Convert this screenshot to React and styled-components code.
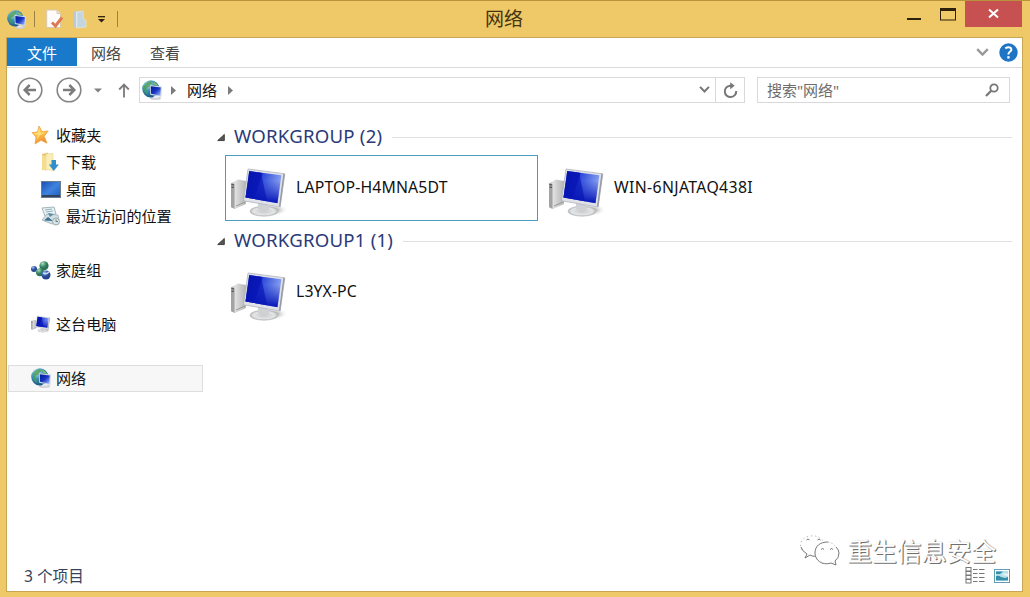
import React from "react";
import styled, { createGlobalStyle } from "styled-components";

const GlobalStyle = createGlobalStyle`
  * { box-sizing: border-box; }
  body { margin: 0; overflow: hidden; font-family: "Noto Sans", "Noto Sans CJK SC", sans-serif; }
  svg { display: block; flex: none; overflow: visible; }
`;

const Window = styled.div`
  position: relative;
  width: 1030px;
  height: 597px;
  background: #efc867;
  border-top: 1px solid #b8923c;
  display: flex;
  flex-direction: column;
  padding: 0 7px 5px 6px;
`;

const TitleBar = styled.header`
  height: 36px;
  display: flex;
  align-items: flex-start;
`;

const QuickAccess = styled.div`
  width: 460px;
  height: 36px;
  display: flex;
  align-items: center;
`;

const QuickItem = styled.div`
  margin-left: ${(p) => p.$gap}px;
`;

const Separator = styled.i`
  width: 1px;
  height: 16px;
  background: #9c8146;
  margin-left: ${(p) => p.$gap}px;
`;

const Title = styled.h1`
  margin: 0;
  width: 76px;
  text-align: center;
  font-size: 19px;
  line-height: 36px;
  font-weight: 400;
  color: #46340f;
`;

const WindowButtons = styled.div`
  margin-left: auto;
  margin-right: 1px;
  display: flex;
`;

const CaptionButton = styled.div`
  width: ${(p) => p.$width}px;
  height: 26px;
  display: flex;
  justify-content: center;
  background: ${(p) => (p.$danger ? "#c75050" : "transparent")};
`;

const Client = styled.main`
  flex: 1;
  background: #fff;
  border: 1px solid #c9a655;
  display: flex;
  flex-direction: column;
`;

const Ribbon = styled.nav`
  height: 30px;
  border-bottom: 1px solid #dadbdc;
  display: flex;
  align-items: flex-start;
`;

const Tab = styled.div`
  width: ${(p) => p.$width}px;
  height: 28px;
  line-height: 30px;
  text-align: center;
  font-size: 15px;
  color: ${(p) => (p.$active ? "#fff" : "#444")};
  background: ${(p) => (p.$active ? "#1979ca" : "transparent")};
`;

const RibbonTools = styled.div`
  margin-left: auto;
  height: 28px;
  padding-right: 4px;
  display: flex;
  align-items: center;
  gap: 10px;
`;

const NavBar = styled.div`
  height: 44px;
  padding: 0 11px 0 9.5px;
  display: flex;
  align-items: center;
`;

const NavButtons = styled.div`
  width: 122.5px;
  display: flex;
  align-items: center;
`;

const AddressBox = styled.div`
  width: 606px;
  height: 26px;
  border: 1px solid #d9d9d9;
  display: flex;
  align-items: center;
  padding-left: 2px;
  font-size: 15px;
  line-height: 24px;
  color: #111;
`;

const Crumb = styled.span`
  margin: -1px 11px 0 11px;
`;

const AddressEnd = styled.div`
  margin-left: auto;
  height: 24px;
  display: flex;
  align-items: center;
`;

const Refresh = styled.div`
  width: 29px;
  height: 24px;
  margin-left: 5px;
  border-left: 1px solid #d9d9d9;
  display: grid;
  place-items: center;
`;

const SearchBox = styled.div`
  margin-left: 12px;
  width: 253px;
  height: 26px;
  border: 1px solid #d9d9d9;
  padding: 0 10px 0 9px;
  display: flex;
  align-items: center;
  justify-content: space-between;
  font-size: 15px;
  line-height: 24px;
  color: #6d6d6d;
`;

const Body = styled.div`
  flex: 1;
  display: flex;
`;

const Sidebar = styled.aside`
  width: 196px;
  padding: 10px 0 0 1px;
`;

const TreeRow = styled.div`
  height: 27px;
  margin-bottom: ${(p) => (p.$spaced ? 27 : 0)}px;
  padding-left: ${(p) => (p.$child ? 32 : 22)}px;
  padding-bottom: 1px;
  border: 1px solid ${(p) => (p.$selected ? "#dedede" : "transparent")};
  background: ${(p) => (p.$selected ? "#f7f7f7" : "transparent")};
  display: flex;
  align-items: center;
  font-size: 15.1px;
  line-height: 25px;
  color: #111;
  white-space: nowrap;
`;

const TreeIcon = styled.span`
  width: 20px;
  margin-right: 5px;
`;

const Content = styled.section`
  flex: 1;
  padding: 13px 10px 0 14px;
`;

const GroupHeader = styled.div`
  height: 24px;
  display: flex;
  align-items: center;
  font-size: 18.6px;
  line-height: 24px;
  letter-spacing: 0.22px;
  color: #2b3a78;
  white-space: nowrap;
`;

const GroupName = styled.span`
  margin: -2px 10px 0 9px;
`;

const GroupRule = styled.i`
  flex: 1;
  height: 1px;
  background: #dfe0e4;
`;

const Items = styled.div`
  height: 80px;
  padding: 6px 0 0 8px;
  display: flex;
  gap: 5px;
`;

const Computer = styled.div`
  width: 313px;
  height: 66px;
  padding: 10px 0 0 4px;
  border: 1px solid ${(p) => (p.$selected ? "#4c9cc2" : "transparent")};
  display: flex;
  align-items: center;
  gap: 8px;
`;

const ComputerName = styled.span`
  margin-top: -12px;
  font-size: 15.8px;
  line-height: 20px;
  letter-spacing: ${(p) => p.$track}px;
  color: #111;
`;

const StatusBar = styled.footer`
  height: 29px;
  padding: 0 12px 2px 17px;
  display: flex;
  align-items: center;
  justify-content: space-between;
  font-size: 15.6px;
  line-height: 26px;
  color: #35445c;
`;

const ViewModes = styled.div`
  display: flex;
  align-items: center;
  gap: 9px;
`;

const Watermark = styled.div`
  position: absolute;
  left: 799px;
  top: 533px;
  display: flex;
  align-items: center;
  gap: 7px;
  font-size: 25px;
  line-height: 34px;
  font-weight: 400;
  letter-spacing: -0.2px;
  color: #fff;
  text-shadow: 1px 1px 0 #6f6f6f, 1px 0 1px #a3a3a3;
`;

const NetworkIcon = ({ size = 20 }) => (
  <svg width={size} height={size} viewBox="0 0 20 20">
    <defs>
      <radialGradient id="globe" cx=".35" cy=".25" r=".8">
        <stop offset="0" stopColor="#b9e3e6" />
        <stop offset=".45" stopColor="#3b93b5" />
        <stop offset="1" stopColor="#15507f" />
      </radialGradient>
      <linearGradient id="miniScreen" x2="1" y2="1">
        <stop offset="0" stopColor="#071a92" />
        <stop offset=".5" stopColor="#1633c4" />
        <stop offset="1" stopColor="#a9c4ff" />
      </linearGradient>
    </defs>
    <ellipse cx="13.5" cy="18.3" rx="5.5" ry="1.5" fill="#c8ccd2" />
    <circle cx="8.8" cy="8.8" r="8.6" fill="url(#globe)" />
    <path d="M2 6Q5 1 9 1.3Q11 3 8.5 4.5Q8 7 5 7.5L4 10Q6 12 6 15Q1 12 2 6Z" fill="#4d9e52" opacity=".8" />
    <path d="M11 1.5Q15 3 16.5 6L12 5Z" fill="#7fba71" />
    <path d="M8 5.2L20 6.6L19.4 17L8.2 14.8Z" fill="#cfdae8" />
    <path d="M8.8 6.2L18.8 7.5L18.3 15.8L9 13.8Z" fill="url(#miniScreen)" />
    <path d="M12 16L15 16.5L17 18.3H10.5Z" fill="#e7e9ec" />
  </svg>
);

const PropertiesIcon = () => (
  <svg width="18" height="20" viewBox="0 0 18 20">
    <path d="M.7 1H11l3.5 3.5V18.5H.7Z" fill="#fdfcfa" stroke="#d8c9ac" />
    <path d="M11 1v3.5h3.5" fill="#ede6dc" stroke="#d8c9ac" />
    <path d="M6 13.5L9.5 17L16 8.5" fill="none" stroke="#dd7a55" strokeWidth="3" />
  </svg>
);

const NewFolderIcon = () => (
  <svg width="15" height="19" viewBox="0 0 15 19">
    <path d="M1 2L7 .8V16.5L1 17.5Z" fill="#b9cad5" />
    <path d="M4 1.5H11V17.5H4Z" fill="#e0e9ed" />
    <path d="M5 2.5L11 1L11.5 9L14 10V17L5 18Z" fill="#c5d5df" stroke="#dbe5e8" strokeWidth=".7" />
  </svg>
);

const Caret = () => (
  <svg width="9" height="7" viewBox="0 0 9 7">
    <path d="M1 .7H8" stroke="#2e210b" strokeWidth="1.3" />
    <path d="M1 3H8L4.5 6.5Z" fill="#2e210b" />
  </svg>
);

const RoundArrow = ({ forward }) => (
  <svg width="26" height="26" viewBox="0 0 26 26">
    <circle cx="13" cy="13" r="11.8" fill="#fff" stroke="#858585" strokeWidth="1.6" />
    <path
      d="M19 13H8M12.7 8L7.7 13L12.7 18"
      transform={forward ? "rotate(180 13 13)" : undefined}
      fill="none"
      stroke="#7c7c7c"
      strokeWidth="2.5"
    />
  </svg>
);

const DownMark = () => (
  <svg width="8" height="5" viewBox="0 0 8 5"><path d="M0 .5H8L4 4.5Z" fill="#808080" /></svg>
);

const UpArrow = () => (
  <svg width="12" height="15" viewBox="0 0 12 15">
    <path d="M6 14.5V2M1.2 6.5L6 1.6L10.8 6.5" fill="none" stroke="#7b7b7b" strokeWidth="1.8" />
  </svg>
);

const RightMark = () => (
  <svg width="5" height="9" viewBox="0 0 5 9"><path d="M0 0L5 4.5L0 9Z" fill="#7b7b7b" /></svg>
);

const Chevron = ({ width = 11, color = "#777" }) => (
  <svg width={width} height={width * 0.65} viewBox="0 0 12 8">
    <path d="M1 1L6 6.2L11 1" fill="none" stroke={color} strokeWidth="2.3" />
  </svg>
);

const RefreshIcon = () => (
  <svg width="16" height="17" viewBox="0 0 16 17">
    <path d="M9 3.7H8A5.7 5.7 0 1 0 14.2 9" fill="none" stroke="#777" strokeWidth="2" />
    <path d="M8.2 .2L12.7 3.7L8.2 7.2Z" fill="#777" />
  </svg>
);

const SearchIcon = () => (
  <svg width="14" height="14" viewBox="0 0 14 14">
    <circle cx="9" cy="5" r="3.7" fill="none" stroke="#777" strokeWidth="1.8" />
    <path d="M6.2 7.8L1 13" stroke="#777" strokeWidth="2.3" />
  </svg>
);

const HelpIcon = () => (
  <svg width="19" height="19" viewBox="0 0 19 19">
    <circle cx="9.5" cy="9.5" r="9.2" fill="#1f74c4" />
    <path d="M6.3 5.4Q9.5 3.2 11.8 5Q13.3 7.5 10.6 9Q9.4 9.8 9.4 11.5" fill="none" stroke="#fff" strokeWidth="2" />
    <rect x="8.3" y="13.2" width="2.3" height="2.3" fill="#fff" />
  </svg>
);

const StarIcon = () => (
  <svg width="19" height="20" viewBox="0 0 19 20">
    <defs>
      <linearGradient id="star" x2=".4" y2="1">
        <stop offset="0" stopColor="#ffd45a" /><stop offset=".5" stopColor="#ffc744" /><stop offset="1" stopColor="#f08d35" />
      </linearGradient>
    </defs>
    <path d="M8 1L11 6.5L17.2 6L13.2 11.2L16 18.2L10 15.3L4 19L5 12L1 7.6L6.5 7Z" fill="url(#star)" stroke="#eba347" strokeWidth=".8" />
    <path d="M8 3L9.5 8L15 7.5L9 10L5 16L7 10L3 8.5L7 8Z" fill="#ffe995" opacity=".7" />
  </svg>
);

const DownloadsIcon = () => (
  <svg width="19" height="20" viewBox="0 0 19 20">
    <path d="M1 2L7 .5L8 17L1 18Z" fill="#e5c66f" />
    <path d="M5 2L12 1.4V18.5L5 17.5Z" fill="#faedb6" stroke="#e8d490" strokeWidth=".6" />
    <path d="M1 3L5 4V19L1 17Z" fill="#f4dd8f" />
    <path d="M10.5 8H15V12.5H17.8L12.8 19L7.8 12.5H10.5Z" fill="#318fc9" />
  </svg>
);

const DesktopIcon = () => (
  <svg width="20" height="17" viewBox="0 0 20 17">
    <defs>
      <linearGradient id="desk" x2="1" y2="1">
        <stop offset="0" stopColor="#174db1" /><stop offset=".5" stopColor="#3f83df" /><stop offset="1" stopColor="#1d5bbd" />
      </linearGradient>
    </defs>
    <rect x=".5" y=".5" width="19" height="16" fill="url(#desk)" stroke="#6b7c90" />
    <path d="M1 15H19" stroke="#31435c" strokeWidth="2" />
  </svg>
);

const RecentIcon = () => (
  <svg width="20" height="20" viewBox="0 0 20 20">
    <path d="M1 2L13 1L15 8L4 10Z" fill="#e9f1f3" stroke="#a4b5bc" />
    <path d="M4 4L11 3M5 6L12 5" stroke="#8fb2c1" />
    <path d="M1 14L6 8L17 9L18 14L11 18Z" fill="#d2dfe3" stroke="#9dafb6" strokeWidth=".8" />
    <path d="M3 14.5L7 11L12 15Z" fill="#39718e" />
    <path d="M7 7L13 8L9 11Z" fill="#5d8ba1" />
    <circle cx="15" cy="15.5" r="3.5" fill="#d7e2e2" stroke="#9babb0" />
    <path d="M15 13.5V15.5H17" fill="none" stroke="#678089" />
  </svg>
);

const HomegroupIcon = () => (
  <svg width="20" height="19" viewBox="0 0 20 19">
    <defs>
      <radialGradient id="ballBlue" cx=".35" cy=".25"><stop offset="0" stopColor="#a8c4ee" /><stop offset=".6" stopColor="#3f66b6" /><stop offset="1" stopColor="#28468f" /></radialGradient>
      <radialGradient id="ballGreen" cx=".35" cy=".25"><stop offset="0" stopColor="#b2dcc0" /><stop offset=".6" stopColor="#4b9a73" /><stop offset="1" stopColor="#2c7359" /></radialGradient>
    </defs>
    <circle cx="3" cy="8" r="3" fill="url(#ballBlue)" />
    <circle cx="13" cy="4.8" r="4.6" fill="url(#ballGreen)" />
    <circle cx="9" cy="11.3" r="4" fill="url(#ballGreen)" />
    <circle cx="15" cy="14" r="4.5" fill="url(#ballBlue)" />
    <path d="M12 12Q15 14 18 11" fill="none" stroke="#d1e2f1" strokeWidth="1.3" />
  </svg>
);

const ComputerIcon = ({ width = 58, height = 49 }) => (
  <svg width={width} height={height} viewBox="0 0 58 49">
    <defs>
      <linearGradient id="screen" x1="0" x2="1" y1=".35" y2=".65">
        <stop offset="0" stopColor="#0712a5" /><stop offset=".35" stopColor="#1220c2" />
        <stop offset=".37" stopColor="#2c48da" /><stop offset="1" stopColor="#9ab2f3" />
      </linearGradient>
      <linearGradient id="screenShade" x2="0" y2="1">
        <stop offset=".3" stopColor="#0515b8" stopOpacity="0" /><stop offset=".95" stopColor="#0515b8" stopOpacity=".95" />
      </linearGradient>
      <linearGradient id="tower" x2="1">
        <stop offset="0" stopColor="#9a9a9a" /><stop offset=".25" stopColor="#e2e2e2" /><stop offset="1" stopColor="#b4b4b4" />
      </linearGradient>
      <radialGradient id="base"><stop offset="0" stopColor="#c7c9cc" /><stop offset=".75" stopColor="#e4e5e6" /><stop offset="1" stopColor="#b6b8ba" /></radialGradient>
      <radialGradient id="shadow"><stop offset=".3" stopColor="#b4b4b4" /><stop offset="1" stopColor="#fff" stopOpacity="0" /></radialGradient>
    </defs>
    <ellipse cx="43" cy="41" rx="15" ry="6" fill="url(#shadow)" />
    <path d="M1 14.5L8 10.5L16 12V35L5 40L1 38Z" fill="url(#tower)" />
    <path d="M1 14.5L4.5 15V40L1 38Z" fill="#a3a3a3" />
    <path d="M1.5 15.5L4 16M1.5 18L4 18.4" stroke="#444" />
    <path d="M6 37L15 33" stroke="#999" />
    <ellipse cx="34" cy="42.2" rx="14" ry="5" fill="url(#base)" stroke="#b9babc" strokeWidth=".6" />
    <path d="M28 34L38 36L39 41Q33 44 28 40Z" fill="#cfd1d4" />
    <path d="M18 0L54.8 4.8L50.2 38L13.5 31.8Z" fill="#e0e2e8" stroke="#b0b4be" strokeWidth=".8" />
    <path d="M53.3 4.8L54.8 4.9L50.2 38L49 37.1Z" fill="#969aa4" />
    <path d="M19.2 2L51.4 6.3L47.5 34.2L15.5 28.5Z" fill="url(#screen)" />
    <path d="M19.2 2L51.4 6.3L47.5 34.2L15.5 28.5Z" fill="url(#screenShade)" />
    <path d="M19.2 2L31 3.6L37 32.3L15.5 28.5Z" fill="#0715b4" opacity=".65" />
  </svg>
);

const GroupMark = () => (
  <svg width="8" height="7" viewBox="0 0 9 8"><path d="M8.3 .5V7.5H.7Z" fill="#555" stroke="#333" /></svg>
);

const DetailsIcon = () => (
  <svg width="20" height="17" viewBox="0 0 20 17" fill="none" stroke="#777">
    {[0.5, 4.5, 8.5, 12.5].map((y) => (
      <React.Fragment key={y}>
        <rect x="1" y={y} width="5" height="3.5" />
        <path d={`M8 ${y + 2}H12.5M14 ${y + 2}H19.5`} />
      </React.Fragment>
    ))}
  </svg>
);

const TilesIcon = () => (
  <svg width="16" height="14" viewBox="0 0 16 14">
    <rect x=".5" y=".5" width="15" height="13" fill="#fff" stroke="#639fb4" />
    <rect x="2" y="2" width="12" height="9.5" fill="#b7dfe8" />
    <path d="M2 2.5H9L6 5H2ZM2 7Q5 6 7 8L11 9L14 8V11.5H2Z" fill="#328fa9" />
    <path d="M8 6L11 4L14 5V7Z" fill="#e5f5f6" />
  </svg>
);

const ChatLogo = () => (
  <svg width="41" height="32" viewBox="0 0 41 32" fill="none" stroke="#777" strokeWidth="1">
    <path d="M3 15C-1 8 4 2 11 1Q20 0 24 6" stroke="#bbb" strokeDasharray="1.5 2.5" />
    <path d="M2 12Q3 16 8 19L6 23L11 20Q14 22 17 21" />
    <path d="M37 12Q40 15 40 18Q40 23 36 26L37 30L32 28C23 31 16 25 16 18C16 11 21 7 29 7" fill="#fff" />
    <path d="M29 7Q34 8 37 12" stroke="#bbb" strokeDasharray="1.5 2" />
    <path d="M7.5 5Q9 3 10.5 5M18.5 5Q20 3 21.5 5M22 14.5Q24 12.5 25 14.5M31 14.5Q32.5 12.5 34 14.5" />
  </svg>
);

const favorites = [
  { label: "收藏夹", icon: <StarIcon /> },
  { label: "下载", icon: <DownloadsIcon />, child: true },
  { label: "桌面", icon: <DesktopIcon />, child: true },
  { label: "最近访问的位置", icon: <RecentIcon />, child: true, spaced: true },
  { label: "家庭组", icon: <HomegroupIcon />, spaced: true },
  { label: "这台电脑", icon: <ComputerIcon width={20} height={17} />, spaced: true },
  { label: "网络", icon: <NetworkIcon />, selected: true },
];

const groups = [
  {
    name: "WORKGROUP (2)",
    computers: [
      { name: "LAPTOP-H4MNA5DT", selected: true, track: 0.15 },
      { name: "WIN-6NJATAQ438I", track: 0.35 },
    ],
  },
  { name: "WORKGROUP1 (1)", computers: [{ name: "L3YX-PC", track: 0.1 }] },
];

export default function App() {
  return (
    <Window>
      <GlobalStyle />
      <TitleBar>
        <QuickAccess>
          <QuickItem $gap={1}><NetworkIcon size={19} /></QuickItem>
          <Separator $gap={8} />
          <QuickItem $gap={11}><PropertiesIcon /></QuickItem>
          <QuickItem $gap={8}><NewFolderIcon /></QuickItem>
          <QuickItem $gap={10}><Caret /></QuickItem>
          <Separator $gap={11} />
        </QuickAccess>
        <Title>网络</Title>
        <WindowButtons>
          <CaptionButton $width={34}>
            <svg width="14" height="26"><path d="M0 18H14" stroke="#2e210b" strokeWidth="2" /></svg>
          </CaptionButton>
          <CaptionButton $width={34}>
            <svg width="16" height="26">
              <rect x=".5" y="8" width="15" height="11" fill="none" stroke="#2e210b" />
              <path d="M0 8.5H16" stroke="#2e210b" strokeWidth="3" />
            </svg>
          </CaptionButton>
          <CaptionButton $width={57} $danger>
            <svg width="11" height="26"><path d="M1 8.5L10 16.5M10 8.5L1 16.5" stroke="#fff" strokeWidth="2" /></svg>
          </CaptionButton>
        </WindowButtons>
      </TitleBar>
      <Client>
        <Ribbon>
          <Tab $width={70} $active>文件</Tab>
          <Tab $width={58}>网络</Tab>
          <Tab $width={60}>查看</Tab>
          <RibbonTools><Chevron width={13} color="#999" /><HelpIcon /></RibbonTools>
        </Ribbon>
        <NavBar>
          <NavButtons>
            <RoundArrow />
            <QuickItem $gap={13}><RoundArrow forward /></QuickItem>
            <QuickItem $gap={12}><DownMark /></QuickItem>
            <QuickItem $gap={16.5}><UpArrow /></QuickItem>
          </NavButtons>
          <AddressBox>
            <NetworkIcon />
            <QuickItem $gap={9}><RightMark /></QuickItem>
            <Crumb>网络</Crumb>
            <RightMark />
            <AddressEnd>
              <Chevron />
              <Refresh><RefreshIcon /></Refresh>
            </AddressEnd>
          </AddressBox>
          <SearchBox>搜索"网络"<SearchIcon /></SearchBox>
        </NavBar>
        <Body>
          <Sidebar>
            {favorites.map((f) => (
              <TreeRow key={f.label} $child={f.child} $spaced={f.spaced} $selected={f.selected}>
                <TreeIcon>{f.icon}</TreeIcon>
                {f.label}
              </TreeRow>
            ))}
          </Sidebar>
          <Content>
            {groups.map((g) => (
              <React.Fragment key={g.name}>
                <GroupHeader>
                  <GroupMark />
                  <GroupName>{g.name}</GroupName>
                  <GroupRule />
                </GroupHeader>
                <Items>
                  {g.computers.map((c) => (
                    <Computer key={c.name} $selected={c.selected}>
                      <ComputerIcon />
                      <ComputerName $track={c.track}>{c.name}</ComputerName>
                    </Computer>
                  ))}
                </Items>
              </React.Fragment>
            ))}
          </Content>
        </Body>
        <StatusBar>
          <span>3 个项目</span>
          <ViewModes><DetailsIcon /><TilesIcon /></ViewModes>
        </StatusBar>
      </Client>
      <Watermark><ChatLogo /><span>重生信息安全</span></Watermark>
    </Window>
  );
}
